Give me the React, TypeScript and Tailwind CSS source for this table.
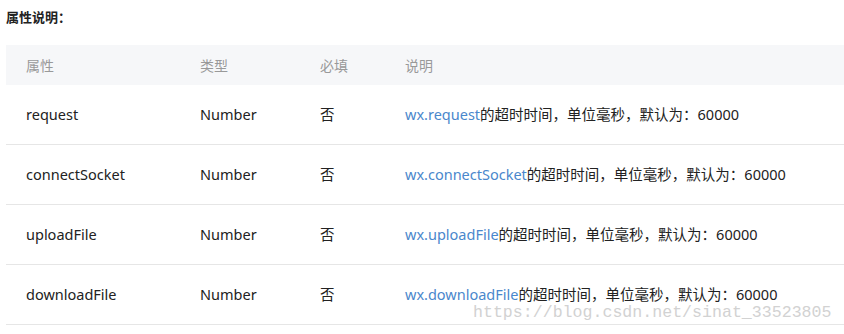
import React from 'react';

const rows = [
  { name: 'request', api: 'wx.request' },
  { name: 'connectSocket', api: 'wx.connectSocket' },
  { name: 'uploadFile', api: 'wx.uploadFile' },
  { name: 'downloadFile', api: 'wx.downloadFile' },
];

const App = () => {
  return (
    <div
      className="relative w-[844px] h-[334px] bg-white text-[#222] overflow-hidden"
      style={{ fontFamily: '"Noto Sans", "Noto Sans CJK SC", sans-serif' }}
    >
      <div className="pl-[6px] pt-[8px] h-[45px] text-[13px] font-bold leading-[18px] text-[#222]">
        属性说明：
      </div>

      <div className="ml-[6px] w-[838px] text-[14.5px]">
        {/* header */}
        <div className="flex h-[40px] items-center bg-[#f6f7f9] text-[14px] text-[#999]">
          <div className="w-[174px] pl-[20px]">属性</div>
          <div className="w-[120px] pl-[20px]">类型</div>
          <div className="w-[85px] pl-[20px]">必填</div>
          <div className="flex-1 pl-[20px]">说明</div>
        </div>

        {rows.map((row) => (
          <div key={row.name} className="flex h-[60px] items-center border-b border-[#e6e6e6]">
            <div className="w-[174px] pl-[20px]">{row.name}</div>
            <div className="w-[120px] pl-[20px]">Number</div>
            <div className="w-[85px] pl-[20px]">否</div>
            <div className="flex-1 pl-[20px]">
              <span className="text-[#4a87cc]">{row.api}</span>
              的超时时间，单位毫秒，默认为：60000
            </div>
          </div>
        ))}
      </div>

      {/* watermark */}
      <div
        className="absolute left-[473px] top-[303px] text-[16.6px] leading-[20px] text-[#d2d2d2]"
        style={{ fontFamily: '"Liberation Mono", monospace' }}
      >
        https://blog.csdn.net/sinat_33523805
      </div>
    </div>
  );
};

export default App;
